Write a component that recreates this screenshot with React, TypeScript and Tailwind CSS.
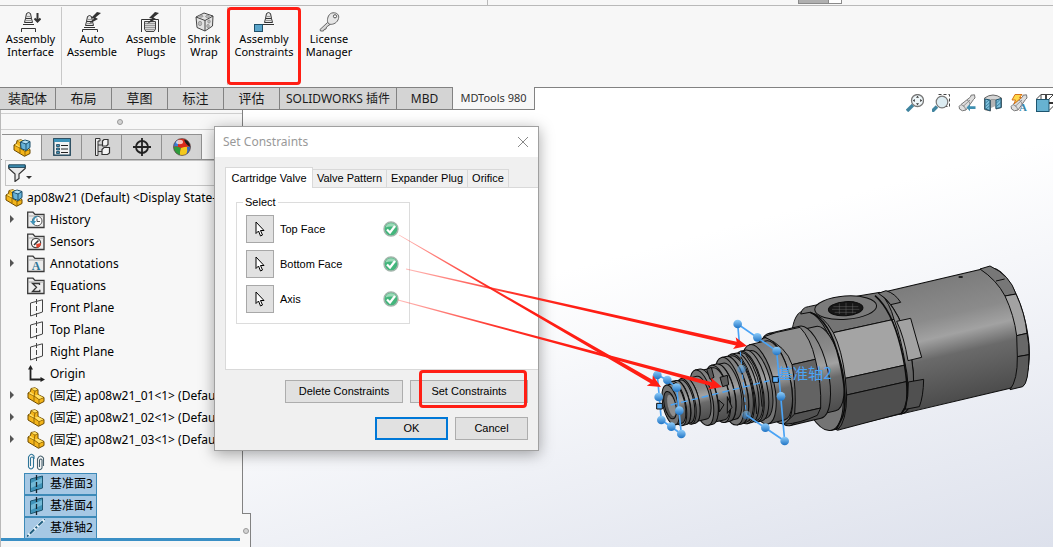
import { useState, type ReactNode } from "react";

type TreeItem = {
  label: string;
  icon: ReactNode;
  expandable?: boolean;
  selected?: boolean;
};

function Valve({ x = 0, y = 0 }: { x?: number; y?: number }) {
  return (
    <g transform={`translate(${x} ${y})`} fill="#e4e4e4" stroke="#333" strokeWidth="1">
      <path d="M3.5 1.5 Q5.5 -.5 7.5 1.5 L8.5 6.5 H2.5 Z" />
      <path d="M2.5 6.5 H8.5 L9.5 10.5 H1.5 Z" />
      <path d="M3 4.5 H8 M2.5 8.5 H8.5" stroke="#999" />
      <path d="M0 12.5 H11" />
    </g>
  );
}

const bolt = "M9 0 L3 6 L6 6.4 L1 12 L10 7 L7.4 5.6 L13 1 Z";

const ribbonIcons: Record<string, ReactNode> = {
  interface: (
    <>
      <Valve x={3} y={1} />
      <path d="M17.5 2 V10 M14.5 7.5 L17.5 10.5 L20.5 7.5" stroke="#333" strokeWidth="2" fill="none" />
      <path d="M1.5 21 V17.5 H15.5 V21" stroke="#333" fill="none" />
    </>
  ),
  auto: (
    <>
      <Valve x={2} y={4} />
      <path d={bolt} transform="translate(6 1)" fill="#333" />
      <path d="M.5 21 V18.5 H15.5 V21" stroke="#333" fill="none" />
    </>
  ),
  plugs: (
    <>
      <path d="M.5 21 V8.5 H17.5 V21" stroke="#333" fill="none" />
      <path d="M3.5 10.5 H14.5 V18 L13 20.5 H5 L3.5 18 Z" fill="#d6d6d6" stroke="#444" />
      <path d="M4 12.5 H14 M4 14.5 H14 M4 16.5 H14 M4 18.5 H14" stroke="#999" />
      <path d={bolt} transform="translate(5 1)" fill="#333" />
    </>
  ),
  wrap: (
    <g stroke="#444" fill="#e2e2e2" transform="translate(0 1)">
      <path d="M2 5 L10 1 L19 4 L18.5 14 L11 19 L3 15.5 Z" />
      <path d="M2 5 L11 8.5 L19 4 M11 8.5 V19" fill="none" />
      <g fill="#bbb" stroke="#888" strokeWidth=".7">
        <ellipse cx="7" cy="4.2" rx="2" ry="1" />
        <ellipse cx="13.5" cy="4.5" rx="2" ry="1" />
        <ellipse cx="6" cy="11.5" rx="1.7" ry="2.2" />
        <ellipse cx="15" cy="9.5" rx="1.3" ry="1.6" />
        <ellipse cx="14" cy="14" rx="1.3" ry="1.6" />
      </g>
    </g>
  ),
  constraints: (
    <>
      <Valve x={9} y={1} />
      <rect x=".5" y="13.5" width="8" height="7" fill="#5aa5cb" stroke="#1f4f68" />
    </>
  ),
  license: (
    <g transform="translate(0 1)">
      <path d="M8.5 10.5 L1 17.5 L1.5 19 H4.5 L5 17.5 L7 17 L7.5 15 L11 12.5 Z" fill="#d8d8d8" stroke="#666" />
      <path d="M14 .8 C18 .5 20.5 3 19.5 6.5 C18.5 10.5 14.5 12.8 10.8 12.3 C7.5 11 8.3 6.5 9.5 4 C10.5 2 12 1 14 .8 Z" fill="#e6e6e6" stroke="#666" />
      <circle cx="16" cy="4.3" r="1.6" fill="#fff" stroke="#555" />
    </g>
  ),
};

const ribbonGroups = [
  [{ id: "interface", lines: ["Assembly", "Interface"], width: "w-[61px]" }],
  [
    { id: "auto", lines: ["Auto", "Assemble"], width: "w-[60px]" },
    { id: "plugs", lines: ["Assemble", "Plugs"], width: "w-[58px]" },
  ],
  [{ id: "wrap", lines: ["Shrink", "Wrap"], width: "w-[46px]" }],
  [{ id: "constraints", lines: ["Assembly", "Constraints"], width: "w-[72px]" }],
  [{ id: "license", lines: ["License", "Manager"], width: "w-[58px]" }],
];

const commandTabs = [
  { label: "装配体", style: "w-[56px] text-[13px]" },
  { label: "布局", style: "w-[56px] text-[13px]" },
  { label: "草图", style: "w-[56px] text-[13px]" },
  { label: "标注", style: "w-[56px] text-[13px]" },
  { label: "评估", style: "w-[56px] text-[13px]" },
  { label: "SOLIDWORKS 插件", style: "w-[117px] text-[12px]" },
  { label: "MBD", style: "w-[56px] text-[12px]" },
  { label: "MDTools 980", style: "w-[82px] text-[11px]" },
];

function Icon({ children }: { children: ReactNode }) {
  return (
    <svg width="18" height="18" viewBox="0 0 18 18" className="shrink-0" aria-hidden="true">
      {children}
    </svg>
  );
}

const partShape = (
  <g stroke="#6d4a00" strokeLinejoin="round">
    <path d="M1 6 L3.5 4.5 L4 1.5 L8 .8 L11 2.5 V7.5 L17 10.5 V14.5 L11.5 17.3 L1 11 Z" fill="#f4b51a" />
    <path d="M1 6 L7 9 V14 M7 9 L8 4 L11 2.5 M8 4 L4 1.5 M7 9 L12 12.5 V17 M12 12.5 L17 10.5" fill="none" strokeWidth=".7" />
    <path d="M4.2 1.8 L8 1 L10.5 2.6 L8 3.6 Z M7.6 8.6 L11 7.8 L16.4 10.6 L12 12 Z M1.8 6 L3.7 5 L7 7.8 L6.6 8.4 Z" fill="#ffe066" stroke="none" />
  </g>
);

const part = <Icon>{partShape}</Icon>;

const assembly = (
  <Icon>
    {partShape}
    <path d="M7.5 3 L12 1 L17 2.5 V8.5 L13 11.5 L8 9.5 Z" fill="#67b2d8" stroke="#174a66" />
    <path d="M7.5 3 L13 5 L17 2.5 M13 5 V11.5" fill="none" stroke="#174a66" strokeWidth=".9" />
    <path d="M8.5 3 L12 1.6 L15.8 2.7 L13 4.3 Z" fill="#b9e1f3" />
  </Icon>
);

function Folder({ children }: { children: ReactNode }) {
  return (
    <Icon>
      <path d="M.7 16.5 V1.2 H6 L8 3.4 H17 V16.5 Z" fill="#ececec" stroke="#3b3b3b" strokeWidth="1.3" />
      <path d="M1.3 5 H16.5" stroke="#aaa" />
      {children}
    </Icon>
  );
}

const plane = (
  <Icon>
    <path d="M3.5 4 L15.5 .8 V13 L3.5 17 Z" fill="none" stroke="#444" />
    <path d="M9.5 0 V18" stroke="#444" strokeDasharray="5 2" />
  </Icon>
);

const solidPlane = (
  <Icon>
    <path d="M3.5 4 L15.5 1 V13 L3.5 16.8 Z" fill="#3f93b8" stroke="#1d556f" />
    <path d="M4 8 L15 3 V8 L4 13 Z" fill="#72b9d6" />
    <path d="M9.5 0 V18" stroke="#14222b" strokeWidth="1.3" strokeDasharray="5 2" />
  </Icon>
);

const treeItems: TreeItem[] = [
  {
    label: "History",
    expandable: true,
    icon: (
      <Folder>
        <circle cx="10.2" cy="10" r="4.8" fill="#fff" stroke="#555" />
        <path d="M10 7.5 V10.5 H13" stroke="#555" fill="none" />
        <path d="M12 5.3 C7.5 4.5 5.4 7 5.3 10 H3 L6.5 14 L9 10 H7.3 C7.5 7.5 9 6.5 12 5.3 Z" fill="#3f93b8" />
      </Folder>
    ),
  },
  {
    label: "Sensors",
    icon: (
      <Folder>
        <circle cx="9" cy="10" r="4.6" fill="#fff" stroke="#444" strokeWidth="1.2" />
        <path d="M14 10 A5 5 0 0 1 9.5 14.8 L9.2 11 Z" fill="#e8442e" />
        <path d="M7 12 L11.5 7.5" stroke="#333" strokeWidth="1.6" />
      </Folder>
    ),
  },
  {
    label: "Annotations",
    expandable: true,
    icon: (
      <Folder>
        <text x="9" y="15" textAnchor="middle" fontSize="12" fontWeight="700" fill="#2e7598" fontFamily="Liberation Serif, serif">A</text>
      </Folder>
    ),
  },
  {
    label: "Equations",
    icon: (
      <Folder>
        <path d="M12.5 8 V6.5 H5.5 L9.5 10.3 L5.5 14.5 H12.8 V12.8" fill="none" stroke="#333" strokeWidth="1.3" />
      </Folder>
    ),
  },
  { label: "Front Plane", icon: plane },
  { label: "Top Plane", icon: plane },
  { label: "Right Plane", icon: plane },
  {
    label: "Origin",
    icon: (
      <Icon>
        <path d="M3.5 3 V14.5 H14" fill="none" stroke="#222" strokeWidth="1.8" />
        <path d="M1 4.5 L3.5 0 L6 4.5 Z M13.5 12 L18 14.5 L13.5 17 Z" fill="#222" />
      </Icon>
    ),
  },
  { label: "(固定) ap08w21_01<1> (Default)", icon: part, expandable: true },
  { label: "(固定) ap08w21_02<1> (Default)", icon: part, expandable: true },
  { label: "(固定) ap08w21_03<1> (Default)", icon: part, expandable: true },
  {
    label: "Mates",
    icon: (
      <Icon>
        <path d="M3.5 13 V5 Q5 3 6.5 5 V14 Q4 18 1.5 14 V4 Q4 -1 7 3 V6" fill="none" stroke="#2e7598" strokeWidth="1.1" />
        <path d="M12.5 14 V7 Q14 5 15 7 V15 Q13 18.5 10.5 15 V6 Q13 .5 16.5 5 V13" fill="none" stroke="#48616e" strokeWidth="1.1" />
      </Icon>
    ),
  },
  { label: "基准面3", icon: solidPlane, selected: true },
  { label: "基准面4", icon: solidPlane, selected: true },
  {
    label: "基准轴2",
    selected: true,
    icon: (
      <Icon>
        <path d="M0 17.5 L18 0" stroke="#e8f3fa" strokeWidth="3" />
        <path d="M0 17.5 L18 0" stroke="#215f80" strokeWidth="2" strokeDasharray="2 2 6 2" />
      </Icon>
    ),
  },
];

const managerTabs = [
  { label: "FeatureManager", icon: assembly },
  {
    label: "PropertyManager",
    icon: (
      <Icon>
        <rect x=".8" y=".8" width="16.4" height="16.4" fill="#f2f2f2" stroke="#1d4358" strokeWidth="1.4" />
        <path d="M1 2.5 H17" stroke="#3f93b8" strokeWidth="3" />
        <path d="M8 7.5 H15 M8 11 H15 M8 14.5 H15" stroke="#222" strokeWidth="1.2" />
        <path d="M3.5 6.5 H6.5 V8.5 H3.5 Z M3.5 10 H6.5 V12 H3.5 Z M3.5 13.5 H6.5 V15.5 H3.5 Z" fill="#3f93b8" stroke="#1d4358" strokeWidth=".8" />
      </Icon>
    ),
  },
  {
    label: "ConfigurationManager",
    icon: (
      <Icon>
        <path d="M2.5 .5 H7 V3 H5 V17.5 H2.5 Z M5 7 H9 M5 13.5 H9" fill="#eee" stroke="#333" />
        <path d="M9.5 3 L11 1.5 H15 V6.5 L13.5 8 H9.5 Z M9 11.5 L11 9.5 H16.5 V15 L14.5 16.5 H9 Z" fill="#f4f4f4" stroke="#333" strokeWidth="1.2" />
      </Icon>
    ),
  },
  {
    label: "DimXpertManager",
    icon: (
      <Icon>
        <circle cx="9" cy="9" r="6" fill="none" stroke="#222" strokeWidth="1.8" />
        <path d="M9 0 V18 M0 9 H18" stroke="#222" strokeWidth="1.8" />
      </Icon>
    ),
  },
  {
    label: "DisplayManager",
    icon: (
      <Icon>
        <defs>
          <clipPath id="ball"><circle cx="9" cy="9" r="8.5" /></clipPath>
        </defs>
        <g clipPath="url(#ball)">
          <path d="M0 0 H18 V18 H0 Z" fill="#d92b1c" />
          <path d="M0 3 L5 1 V8.5 Q2 8 0 9 Z" fill="#3b7bd4" />
          <path d="M0 9 Q4 7.5 8 10 Q6.5 14 7 18 H0 Z" fill="#2d9c3c" />
          <path d="M8 10 Q13 8 18 9 L16 13 L12 18 H7 Q6.5 14 8 10 Z" fill="#f3c81c" />
          <path d="M14 9 L18 8 V14 L13 18 Q15 13 14 9 Z" fill="#3568c0" />
          <path d="M11 1.5 Q17 2 17.5 9 Q12.5 7 11 1.5 Z" fill="#1c1c1c" />
          <ellipse cx="6.5" cy="4" rx="3.5" ry="2.2" fill="#fff" opacity=".7" />
        </g>
        <circle cx="9" cy="9" r="8.5" fill="none" stroke="#555" strokeWidth=".7" />
      </Icon>
    ),
  },
];

const cylinder = (
  <>
    <path d="M3 10.5 L12.5 3 L13 1.2 L16.5 .8 L17 4 L15.5 5.5 L8 16 Q4 18 1.5 15 Q0 12 3 10.5 Z" fill="#dedede" stroke="#777" />
    <path d="M3 10.5 Q7 11.5 8 16 M9 6 Q11.5 7 12 10 M5 12.5 L12 6" fill="none" stroke="#888" strokeWidth=".9" />
  </>
);

const viewTools = [
  {
    label: "Zoom to Fit",
    icon: (
      <>
        <path d="M1 17 L7 11" stroke="#40849f" strokeWidth="3.4" />
        <circle cx="11.5" cy="6.5" r="6" fill="#eef6f9" stroke="#777" strokeWidth="1.3" />
        <path d="M11.5 1.8 L13 3.8 H10 Z M11.5 11.2 L13 9.2 H10 Z M6.8 6.5 L8.8 5 V8 Z M16.2 6.5 L14.2 5 V8 Z" fill="#333" />
      </>
    ),
  },
  {
    label: "Zoom to Area",
    icon: (
      <>
        <path d="M6.5 .5 H17.5 V12.5 H12" fill="none" stroke="#444" strokeDasharray="3 2" />
        <path d="M0 17.5 L5 12.5" stroke="#40849f" strokeWidth="3.4" />
        <circle cx="10" cy="8" r="5.8" fill="#dcecf2" stroke="#777" strokeWidth="1.2" />
      </>
    ),
  },
  {
    label: "Previous View",
    icon: (
      <>
        {cylinder}
        <path d="M8.5 13.5 L12 10 V12.3 H17.5 V15 H12 V17.3 Z" fill="#3f8fb0" />
      </>
    ),
  },
  {
    label: "Section View",
    icon: (
      <>
        <path d="M.5 4 Q9 -2 17.5 4 V13.5 L12 15 V6 H6.5 V17 L.5 15.5 Z" fill="#d4d4d4" stroke="#666" />
        <path d="M7 6 H11.5 V12 L7 14 Z" fill="#b4b4b4" />
        <path d="M1 5 L6 6 V16.5 L1 15 Z M12 6 L17 4.5 V13.5 L12 14.5 Z" fill="#7fc0dc" stroke="#1d556f" />
        <path d="M1.5 9 L5 6 M1.5 12.5 L6 8.5 M2 15 L6 11.5 M12.5 9 L16 5.5 M12.5 12.5 L17 8.5" stroke="#2c6f8d" strokeWidth=".8" />
      </>
    ),
  },
  {
    label: "Dynamic Annotation Views",
    icon: (
      <>
        {cylinder}
        <path d="M5 .5 H12 L9.5 3.5 H11.5 L4 10 L5.5 6 H2 Z" fill="#ffd84a" stroke="#d4731c" />
        <text x="13" y="17" textAnchor="middle" fontSize="11" fontWeight="700" fill="#3686a9" fontFamily="Liberation Serif, serif">A</text>
      </>
    ),
  },
  {
    label: "View Orientation",
    icon: (
      <>
        <path d="M.5 5 L5 .5 H17.5 V12 L13 16.5 M5 .5 V5 M13 5 L17.5 .5" fill="none" stroke="#444" />
        <rect x=".5" y="5.5" width="12.5" height="12" fill="#67b2d1" stroke="#1d556f" />
        <path d="M10 1 V5 M13 9 H18" stroke="#333" strokeWidth="1.8" />
      </>
    ),
  },
];

// Turned sections of the valve along its own axis: start, end, radius.
const sections = [
  [1000, 1026, 180],
  [668, 1000, 184],
  [452, 668, 184],
  [430, 478, 130],
  [335, 430, 142],
  [318, 342, 132],
  [272, 322, 122],
  [256, 270, 104],
  [241, 255, 109],
  [226, 240, 104],
  [211, 225, 107],
  [196, 210, 102],
  [181, 195, 104],
  [164, 182, 86],
  [146, 162, 88],
  [112, 148, 80],
  [96, 110, 85],
  [62, 96, 66],
  [48, 60, 70],
  [34, 46, 66],
  [20, 32, 68],
  [0, 20, 61],
];

function Section({ from, to, r }: { from: number; to: number; r: number }) {
  const rx = Math.round(r * 0.37);
  return (
    <>
      <path d={`M${from} ${-r} H${to} A${rx} ${r} 0 0 1 ${to} ${r} H${from} Z`} fill="url(#metal)" />
      <ellipse cx={from} cy="0" rx={rx} ry={r} fill="#747474" />
    </>
  );
}

function ValveModel() {
  return (
    <svg
      viewBox="0 0 1239 600"
      className="pointer-events-none absolute left-[640px] top-[250px] h-[200px] w-[413px]"
      aria-label="Cartridge valve model"
    >
      <defs>
        <linearGradient id="metal" x1="0" y1="0" x2="0" y2="1">
          <stop offset="0" stopColor="#7c7c7c" />
          <stop offset=".3" stopColor="#8b8b8b" />
          <stop offset=".46" stopColor="#a2a2a2" />
          <stop offset=".62" stopColor="#6a6a6a" />
          <stop offset="1" stopColor="#4c4c4c" />
        </linearGradient>
        <linearGradient id="bead" x1="0" y1="0" x2="0" y2="1">
          <stop offset="0" stopColor="#8fcdfa" />
          <stop offset="1" stopColor="#1f73c4" />
        </linearGradient>
      </defs>

      <g transform="translate(92 465) rotate(-13.2)" stroke="#0c0c0c" strokeWidth="3">
        {sections.map(([from, to, r]) => (
          <Section key={from} from={from} to={to} r={r} />
        ))}
        <ellipse cx="-2" cy="0" rx="17" ry="42" fill="#555" />
        <ellipse cx="2" cy="2" rx="11" ry="33" fill="#8e8e8e" stroke="none" />
      </g>

      {/* milled faces of the large body */}
      <g transform="translate(420 0)" stroke="#0c0c0c" strokeWidth="3" strokeLinejoin="round">
        <path d="M90 187 L62 192 Q66 172 85 170 L240 137 L300 127 Q330 160 342 208 L160 248 Q130 195 90 187 Z" fill="#747474" />
        <path d="M160 248 L342 208 Q365 270 376 345 L196 385 Q186 300 160 248 Z" fill="#a4a4a4" />
        <path d="M196 385 L376 345 Q382 370 383 394 L200 435 Z" fill="#585858" />
        <path d="M200 435 L383 394 Q386 460 364 490 L172 541 Q200 515 200 435 Z" fill="#4e4e4e" />
        <path d="M90 187 Q150 210 178 330 T188 500 L168 540" fill="none" strokeWidth="5" />
        <path d="M285 137 Q335 180 362 290 T378 470 L364 492" fill="none" strokeWidth="5" />
        <ellipse cx="197" cy="173" rx="93" ry="35" transform="rotate(-4 197 173)" fill="#7b7b7b" />
        <ellipse cx="197" cy="176" rx="52" ry="21" transform="rotate(-4 197 176)" fill="#171717" />
        <path d="M160 170 H235 M156 178 H238 M164 187 H228 M178 160 V192 M198 158 V195 M218 160 V190" stroke="#666" strokeWidth="1.5" />
        <path d="M318 122 Q345 130 362 157 L332 164 Q320 145 295 130 Z" fill="#777" />
        <path d="M350 214 L392 205 L425 322 L384 332 Q372 260 350 214 Z" fill="#a2a2a2" />
        <path d="M385 396 L431 388 Q430 440 418 470 L376 478 Q386 440 385 396 Z" fill="#505050" />
        <path d="M536 81 H548" strokeWidth="5" />
        <path d="M600 57 L630 48 Q690 75 708 132 L675 138 Q650 90 600 57 Z" fill="#777" />
        <path d="M675 138 L708 132 Q735 190 741 250 L710 257 Q702 195 675 138 Z" fill="#a2a2a2" />
        <path d="M710 257 L741 250 Q748 280 747 314 L712 320 Z" fill="#686868" />
        <path d="M712 320 L747 314 Q746 400 728 410 L690 419 Q713 390 712 320 Z" fill="#5a5a5a" />
        <path d="M648 93 L674 87" />
      </g>

      {/* hex flats, relief holes and thread flanks */}
      <g transform="translate(0 120)" stroke="#0c0c0c" strokeWidth="3" strokeLinejoin="round" fill="none">
        <path d="M372 140 L410 127 L480 112 Q512 145 526 208 L456 224 Q440 170 372 140 Z" fill="#8f8f8f" />
        <path d="M456 224 L526 208 Q545 280 542 354 L464 372 Q470 300 456 224 Z" fill="#636363" />
        <path d="M464 372 L542 354 L532 376 Q480 400 432 403 Z" fill="#525252" />
        <path d="M200 238 L214 232 L222 262 L210 268 Z M240 262 L262 256 L266 284 L248 290 Z M236 330 L252 344 L238 366 Z M262 320 L276 352 L262 370 Z" fill="#5c5c5c" />
        <path d="M318 196 Q362 250 366 350 M302 200 Q346 260 350 372" />
      </g>

      {/* selected reference planes and axis */}
      <g transform="translate(0 120)" stroke="#4aa3f5" strokeWidth="5" fill="none">
        <path d="M52 255 L82 270 L110 293 L124 432 L64 390 Z" />
        <path d="M319 375 L434 453 L410 183 L293 102 L299 170" />
        <path d="M301 185 L319 375" strokeDasharray="14 9" strokeWidth="3" />
        <path d="M92 345 L388 272" strokeDasharray="20 12" strokeWidth="4" />
        <g fill="url(#bead)" stroke="none">
          {[
            [52, 255], [82, 270], [110, 293], [118, 362], [124, 432], [94, 410], [64, 390], [56, 321],
            [293, 102], [352, 142], [410, 183], [423, 319], [434, 453], [376, 413],
          ].map(([cx, cy]) => (
            <circle key={`${cx}-${cy}`} cx={cx} cy={cy} r="13" />
          ))}
          <circle cx="319" cy="375" r="13" opacity=".55" />
          <circle cx="305" cy="237" r="13" opacity=".55" />
        </g>
        <path d="M50 340 H67 V357 H50 Z M398 260 H415 V277 H398 Z" fill="#5db0f8" stroke="#0c0c0c" strokeWidth="3" />
        <text x="412" y="266" fontSize="46" fill="#4aa3f5" stroke="none" fontFamily="Noto Sans CJK SC, sans-serif">基准轴2</text>
      </g>
    </svg>
  );
}

const arrows = [
  { id: "top", x1: 399, y1: 235, x2: 661, y2: 387 },
  { id: "bottom", x1: 406, y1: 269, x2: 747, y2: 346 },
  { id: "axis", x1: 398, y1: 300, x2: 722, y2: 387 },
];

function Arrows() {
  return (
    <svg className="pointer-events-none absolute left-0 top-0 z-20 h-[547px] w-[1053px]" viewBox="0 0 1053 547" aria-hidden="true">
      <defs>
        <linearGradient id="trail" x1="0" x2="1" y1="0" y2="0">
          <stop offset="0" stopColor="#ff1e14" stopOpacity=".3" />
          <stop offset=".3" stopColor="#ff1e14" stopOpacity=".9" />
          <stop offset=".5" stopColor="#ff1e14" />
        </linearGradient>
      </defs>
      {arrows.map(({ id, x1, y1, x2, y2 }) => {
        const length = Math.hypot(x2 - x1, y2 - y1);
        const angle = (Math.atan2(y2 - y1, x2 - x1) * 180) / Math.PI;
        return (
          <path
            key={id}
            transform={`translate(${x1} ${y1}) rotate(${angle})`}
            d={`M0 -.4 L${length - 11} -2 L${length - 13} -6 L${length} 0 L${length - 13} 6 L${length - 11} 2 L0 .4 Z`}
            fill="url(#trail)"
          />
        );
      })}
    </svg>
  );
}

function Ribbon() {
  return (
    <header className="border-b border-[#828282] bg-[#f7f7f7]">
      <div className="flex h-[6px] items-start border-b border-[#b9b9b9]">
        <div className="h-[5px] w-[488px] border-r border-[#b9b9b9]" />
        <div className="mr-[211px] ml-auto flex h-[4px] w-[44px] border border-t-0 border-[#8a8a8a] bg-[#b0b0b0]">
          <span className="ml-auto w-[13px] border-l border-[#8a8a8a] bg-white" />
        </div>
      </div>
      <div className="flex h-[81px]">
        {ribbonGroups.map((group, idx) => (
          <div key={idx} className={`mt-px flex h-[78px] ${idx < 3 ? "border-r border-[#c8c8c8]" : ""}`}>
            {group.map(({ id, lines, width }) => (
              <button
                key={id}
                className={`relative flex flex-col items-center pt-[4px] text-[11px] leading-[13px] whitespace-nowrap text-black ${width}`}
              >
                <svg width="21" height="21" viewBox="0 0 21 21" aria-hidden="true">{ribbonIcons[id]}</svg>
                {lines.map((line) => (
                  <span key={line}>{line}</span>
                ))}
                {id === "constraints" && (
                  <span className="absolute inset-x-[-1px] inset-y-0 rounded-sm border-3 border-[#ff1e14]" />
                )}
              </button>
            ))}
          </div>
        ))}
      </div>
    </header>
  );
}

function CommandTabs() {
  const [active, setActive] = useState("MDTools 980");
  return (
    <div className="flex h-[22px] items-start">
      <div role="tablist" className="flex">
        {commandTabs.map(({ label, style }) => (
          <button
            key={label}
            role="tab"
            aria-selected={active === label}
            onClick={() => setActive(label)}
            className={`border-r border-b border-[#828282] whitespace-nowrap ${style} ${
              active === label ? "relative -mt-px h-[23px] bg-[#f7f7f7] text-[#333]" : "h-[22px] bg-[#d4d4d4] text-[#1a1a1a]"
            }`}
          >
            {label}
          </button>
        ))}
      </div>
      <div className="mt-[6px] ml-auto flex w-[147px] gap-2">
        {viewTools.map(({ label, icon }) => (
          <button key={label} aria-label={label} className="shrink-0">
            <Icon>{icon}</Icon>
          </button>
        ))}
      </div>
    </div>
  );
}

function Grip() {
  return <span className="size-[6px] rounded-full border border-[#999] bg-[#d4d4d4]" />;
}

function FeatureTree() {
  return (
    <aside className="flex w-[242px] shrink-0 flex-col border-l border-[#b9b9b9] bg-[#f7f7f7]">
      <div className="mt-[3px] flex h-[17px] items-center justify-center border-y border-[#cfcfcf] pr-1">
        <Grip />
      </div>
      <div className="mt-[4px] flex h-[26px] border-b border-[#909090] pl-px">
        {managerTabs.map(({ label, icon }, idx) => (
          <button
            key={label}
            aria-label={label}
            className={`flex w-[40px] items-center justify-center border-t border-r border-[#909090] ${
              idx === 0 ? "-mb-px bg-[#f7f7f7]" : "bg-[#d4d4d4]"
            }`}
          >
            {icon}
          </button>
        ))}
      </div>
      <button aria-label="Filter" className="ml-1 flex h-[26px] items-center border border-[#c4c4c4] pl-[2px]">
        <Icon>
          <path d="M.8 2 V4.5 L7 10 V17.5 L11 14.5 V10 L17.2 4.5 V2 Z" fill="#e9e9e9" stroke="#333" strokeWidth="1.2" />
          <path d="M.8 .8 H17.2 V3.4 H.8 Z" fill="#3f93b8" stroke="#1d4358" />
        </Icon>
        <span className="mt-2 border-x-[3px] border-t-[3px] border-x-transparent border-t-[#333]" />
      </button>
      <div className="flex h-[23px] items-center gap-1 pl-1 text-[12px] whitespace-nowrap">
        {assembly}
        <span>ap08w21 (Default) &lt;Display State-1&gt;</span>
      </div>
      <ul className="text-[12px] text-black">
        {treeItems.map(({ label, icon, expandable, selected }) => (
          <li key={label} className="flex h-[22px] whitespace-nowrap">
            <span className="flex w-[23px] shrink-0 justify-start pt-[6px] pl-[9px]">
              {expandable && (
                <span className="size-0 border-y-[4px] border-l-[4px] border-y-transparent border-l-[#555]" />
              )}
            </span>
            <span
              className={`flex items-center gap-[5px] border pr-[3px] pl-[2px] ${
                selected ? "border-[#3d8ab8] bg-[#a6c8e4]" : "border-transparent"
              }`}
            >
              {icon}
              <span>{label}</span>
            </span>
          </li>
        ))}
      </ul>
      <div className="-mt-px mr-[2px] h-[3px] bg-[#3a8fc5]" />
    </aside>
  );
}

function SelectRow({ label }: { label: string }) {
  return (
    <div className="flex h-[28px] items-center">
      <button aria-label={`Select ${label}`} className="flex size-[28px] items-center justify-center border border-[#a8a8a8] bg-[#e1e1e1]">
        <svg width="10" height="16" viewBox="0 0 10 16" aria-hidden="true">
          <path d="M1 1 V12.5 L3.5 10 L5.5 15 L7.5 14 L5.5 9.5 H9 Z" fill="#fff" stroke="#000" />
        </svg>
      </button>
      <span className="ml-[6px] w-[103px]">{label}</span>
      <svg width="16" height="16" viewBox="0 0 16 16" aria-hidden="true">
        <circle cx="8" cy="8" r="7" fill="#43b67c" stroke="#a3b5ab" strokeWidth="1.4" />
        <path d="M2.5 6.5 A5.7 5.7 0 0 1 13.5 6.5 Q8 4.5 2.5 6.5 Z" fill="#9bd9b8" />
        <path d="M4 8.5 L7 11.5 L12 5" fill="none" stroke="#fff" strokeWidth="2.2" />
      </svg>
    </div>
  );
}

const dialogButton = "h-[23px] border border-[#adadad] bg-[#e1e1e1]";

function ConstraintsDialog() {
  const [tab, setTab] = useState("Cartridge Valve");
  const tabs = [
    { label: "Cartridge Valve", width: "w-[88px]" },
    { label: "Valve Pattern", width: "w-[74px]" },
    { label: "Expander Plug", width: "w-[81px]" },
    { label: "Orifice", width: "w-[41px]" },
  ];

  return (
    <section
      role="dialog"
      aria-label="Set Constraints"
      className="absolute left-[214px] top-[126px] z-10 w-[325px] border border-[#a0a0a0] bg-[#f0f0f0] pb-[10px] font-['Liberation_Sans',Arial,sans-serif] text-[11px] text-black shadow-[0_3px_14px_rgba(0,0,0,0.35)]"
    >
      <div className="flex h-[30px] items-center justify-between bg-white pr-[9px] pl-2 font-['Noto_Sans','Noto_Sans_CJK_SC',sans-serif] text-[12px] text-[#999]">
        <h2>Set Constraints</h2>
        <button aria-label="Close">
          <svg width="12" height="12" viewBox="0 0 12 12" aria-hidden="true">
            <path d="M1 1 L11 11 M11 1 L1 11" stroke="#888" />
          </svg>
        </button>
      </div>

      <div role="tablist" className="ml-[10px] mt-[10px] flex h-[20px] items-end">
        {tabs.map(({ label, width }) => (
          <button
            key={label}
            role="tab"
            aria-selected={tab === label}
            onClick={() => setTab(label)}
            className={`border-t border-r border-[#d9d9d9] whitespace-nowrap ${width} ${
              tab === label ? "relative -mb-px h-[21px] border-l bg-white" : "h-[18px]"
            }`}
          >
            {label}
          </button>
        ))}
      </div>
      <div className="ml-[10px] h-[183px] border border-r-0 border-[#d9d9d9] bg-white px-[10px] pt-[7px]">
        <fieldset className="h-[129px] w-[174px] border border-[#dcdcdc] px-[9px]">
          <legend className="-ml-[3px] px-[2px] leading-[14px]">Select</legend>
          <div className="flex flex-col gap-[7px] pt-[6px]">
            <SelectRow label="Top Face" />
            <SelectRow label="Bottom Face" />
            <SelectRow label="Axis" />
          </div>
        </fieldset>
      </div>

      <div className="mt-[10px] mr-[10px] flex justify-end gap-[7px]">
        <button className={`w-[118px] ${dialogButton}`}>Delete Constraints</button>
        <button className={`relative w-[118px] ${dialogButton}`}>
          Set Constraints
          <span className="absolute -top-[11px] left-[8px] h-[38px] w-[108px] rounded-sm border-3 border-[#ff1e14]" />
        </button>
      </div>
      <div className="mt-[14px] mr-[10px] flex justify-end gap-[7px]">
        <button className="h-[23px] w-[73px] border-2 border-[#0078d7] bg-[#e1e1e1]">OK</button>
        <button className={`w-[73px] ${dialogButton}`}>Cancel</button>
      </div>
    </section>
  );
}

export default function App() {
  return (
    <div className="relative flex min-h-screen flex-col overflow-hidden bg-white font-['Noto_Sans','Noto_Sans_CJK_SC',sans-serif]">
      <Ribbon />
      <main className="flex flex-1 flex-col bg-linear-165 from-white from-45% to-[#dde1ec]">
        <CommandTabs />
        <div className="flex flex-1">
          <FeatureTree />
          <div className="flex w-[9px] flex-col">
            <div className="flex-1 border-l border-[#828282]" />
            <div className="flex h-[34px] items-center border-t border-r border-[#828282] bg-[#f7f7f7] pl-px">
              <Grip />
            </div>
          </div>
        </div>
      </main>
      <ValveModel />
      <ConstraintsDialog />
      <Arrows />
    </div>
  );
}
